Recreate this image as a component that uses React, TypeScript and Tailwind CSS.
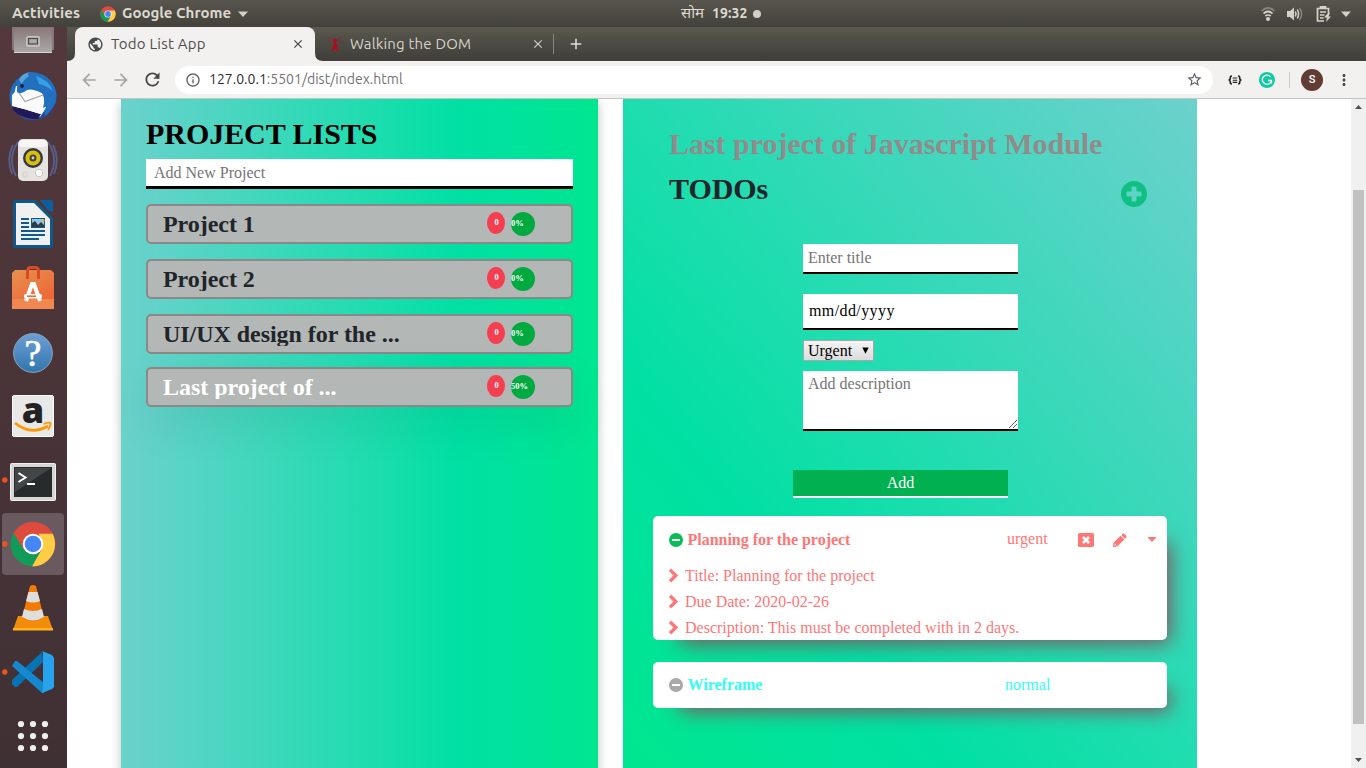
import React from "react";
import { MdPublic, MdClose, MdAdd, MdArrowBack, MdArrowForward, MdRefresh, MdInfoOutline, MdStarBorder, MdMoreVert } from "react-icons/md";

function Slot({ children, running, active }: { children: React.ReactNode; running?: boolean; active?: boolean }) {
  return (
    <svg className="block h-16 w-[67px] shrink-0" viewBox="0 0 67 64">
      {active && <rect x="2" y="1" width="62" height="62" rx="4" fill="#685a5f" />}
      {children}
      {running && <circle cx="4.8" cy="32" r="2.7" fill="#e95420" />}
    </svg>
  );
}

function ChromeLogo() {
  return (
    <g>
      <circle r="22.3" fill="#dd4b3e" />
      <path d="M-19.4 -11 L-9 6 L0 10 L9.5 4 L-0.8 22.3 A22.3 22.3 0 0 1 -19.4 -11Z" fill="#119b58" />
      <path d="M19.6 -10.2 A22.3 22.3 0 0 1 -0.8 22.3 L9 5 L6 -10.2 Z" fill="#ffce44" />
      <circle r="10.3" fill="#fff" />
      <circle r="8.3" fill="#4487f4" />
    </g>
  );
}

function Dock() {
  return (
    <aside className="flex w-[67px] shrink-0 flex-col overflow-hidden bg-linear-to-b from-[#53383c] to-[#3f3034]">
      <svg className="block h-[37px] w-[67px] shrink-0" viewBox="0 27 67 37">
        <defs>
          <linearGradient id="cab" x1="0" y1="0" x2="0" y2="1">
            <stop offset="0" stopColor="#806a6c" />
            <stop offset="1" stopColor="#aaa9a8" />
          </linearGradient>
        </defs>
        <path d="M12 20H54V50H12Z" fill="#857779" />
        <path d="M14 20H52V53H14Z" fill="url(#cab)" />
        <path d="M14 52.5H52" stroke="#d5d5d5" />
        <rect x="26" y="36" width="14" height="11" rx="2" fill="#c4bfbf" />
        <rect x="28.5" y="38.5" width="9" height="5.5" fill="#aaa" stroke="#4b4444" strokeWidth="1.2" />
      </svg>
      <Slot>
        <defs>
          <linearGradient id="tb" x1="0" y1="0" x2="0.8" y2="1">
            <stop offset="0" stopColor="#1b62ad" />
            <stop offset="0.5" stopColor="#2878c8" />
            <stop offset="1" stopColor="#1c3fa8" />
          </linearGradient>
        </defs>
        <circle cx="33" cy="32.5" r="23.5" fill="url(#tb)" />
        <path d="M16 22L12 40L20 47L40 53L46 44L43 30L30 21Z" fill="#fafafa" />
        <path d="M12 42L24 45L41 50L38 55L33 55Q20 54 13 46Z" fill="#211957" />
        <path d="M12 31L12 42L24 45L40 50L43 44L42 30L30 22L19 24Z" fill="#fafafa" />
        <path d="M17 26L25 37.5L43 31" fill="none" stroke="#a5a5a5" strokeWidth="1.2" />
        <path d="M17 25Q17 11 30 8Q52 9 56.5 30Q57 40 50 47L46 52L44 47L47 42L43 44Q46 33 42 29Q32 24 27 26Q21 31 17 28Z" fill="#2370c0" />
        <path d="M19 16Q22 9 30 8Q26 10 29 12Q24 15 22 20Z" fill="#59a3dd" />
        <path d="M36 12Q49 16 53 27Q45 21 39 20Z" fill="#37a0e4" />
        <circle cx="22" cy="22" r="2" fill="#172548" />
      </Slot>
      <Slot>
        <g fill="none" stroke="#56608c" strokeWidth="1.8">
          <path d="M18 14Q7 31 16 48M13 17Q6 31 12 46" />
          <path d="M48 14Q59 31 50 48M53 17Q60 31 54 46" />
        </g>
        <rect x="18" y="11" width="30" height="42" rx="5" fill="#e4e3e0" />
        <rect x="19" y="12" width="28" height="7" rx="4" fill="#f6f6f4" />
        <circle cx="33" cy="30" r="10" fill="#34383a" />
        <circle cx="33" cy="30" r="7.6" fill="#dabd14" />
        <circle cx="33" cy="30" r="3.5" fill="#444536" />
        <circle cx="33" cy="30" r="1.4" fill="#ccd2cc" />
        <circle cx="39" cy="45" r="3.7" fill="#fbfbfb" stroke="#b7b7b4" strokeWidth=".7" />
        <rect x="23" y="44" width="4" height="5" rx="1" fill="none" stroke="#c9c9c6" strokeWidth=".8" />
      </Slot>
      <Slot>
        <path d="M15 8H35L53 26V54Q53 56 51 56H15Q13 56 13 54V10Q13 8 15 8Z" fill="#10578a" />
        <path d="M40 8H51Q53 8 53 10V20Q49 20 46 16Z" fill="#0c5f9b" />
        <path d="M16 11H34L50 27V53H16Z" fill="#f0f0ee" />
        <g stroke="#105b8d" strokeWidth="2"><path d="M21 27H29M21 31H29M21 35H29M21 39H45M21 43H45M21 47H39" /></g>
        <rect x="31" y="26" width="14" height="10" fill="#105b8d" />
        <rect x="32" y="27" width="12" height="8" fill="#8fc5e8" />
        <path d="M32 35V31L35 29L38 33L41 30L44 33V35Z" fill="#2c3c42" />
        <circle cx="43" cy="28.5" r="1.5" fill="#eab43d" />
      </Slot>
      <Slot>
        <defs><linearGradient id="bag" x1="0" y1="0" x2=".6" y2="1"><stop stopColor="#e69150" /><stop offset="1" stopColor="#ee6534" /></linearGradient></defs>
        <path d="M12 17L15 14H51L54 17V53H12Z" fill="url(#bag)" />
        <path d="M12 43H54V53H12Z" fill="#f28851" />
        <path d="M27.5 23V15Q27.5 11.5 31 11.5H35Q38.5 11.5 38.5 15V23" fill="none" stroke="#d94b22" strokeWidth="3" />
        <path d="M26 45L32 28H34L40 45" fill="none" stroke="#fff" strokeWidth="4" />
        <rect x="24" y="38" width="18" height="4.5" rx="2" fill="#fff" />
        <rect x="27" y="39.4" width="9" height="1.6" fill="#ef6b35" />
      </Slot>
      <Slot>
        <defs><linearGradient id="hlp" x1="0" y1="0" x2="0" y2="1"><stop stopColor="#6d9fd8" /><stop offset="1" stopColor="#3076ab" /></linearGradient></defs>
        <circle cx="33" cy="33" r="19.4" fill="url(#hlp)" stroke="#87a5bd" />
        <text x="33" y="46" textAnchor="middle" fill="#fff" stroke="#fff" strokeWidth=".7" fontFamily="Liberation Serif, serif" fontSize="38">?</text>
      </Slot>
      <Slot>
        <rect x="12.5" y="11.5" width="41" height="41" rx="1.5" fill="#e8e8e8" stroke="#fafafa" />
        <text x="33" y="39" textAnchor="middle" fill="#222" fontFamily="Open Sans, sans-serif" fontWeight="800" fontSize="36">a</text>
        <path d="M15 39Q31 52 48 42" fill="none" stroke="#ff9900" strokeWidth="2.8" />
        <path d="M43.5 40Q49 38 50.5 39Q51 42 48 46" fill="none" stroke="#ff9900" strokeWidth="1.8" />
      </Slot>
      <Slot running>
        <rect x="10.5" y="15.5" width="45" height="37" rx="1" fill="#d6d6d4" stroke="#f1f1ef" />
        <rect x="14" y="19" width="38" height="30" fill="#282b2c" />
        <path d="M15 20H51L15 44Z" fill="#424647" />
        <path d="M18.5 25L25.5 29.5L18.5 34M27 36H35" fill="none" stroke="#fff" strokeWidth="2" />
      </Slot>
      <Slot running active>
        <g transform="translate(33 32)"><ChromeLogo /></g>
      </Slot>
      <Slot>
        <path d="M18 40H48L53 54H13Z" fill="#f48c0b" />
        <path d="M13 52H53V54.5H13Z" fill="#ffb320" />
        <path d="M30 10Q33 8 36 10L44 42Q33 49 22 42Z" fill="#f17b04" />
        <path d="M28.5 16H37.5L40 25Q33 28 26 25ZM24 33Q33 37 42 33L44 41Q33 48 22 41Z" fill="#dedfdd" />
      </Slot>
      <Slot running>
        <path d="M12 40L42 12L43 22L17 47H15L12 44Z" fill="#0873b4" />
        <path d="M12 26L15 21H17L44 43V53H42Z" fill="#1688ce" />
        <path d="M42 11L52 15L54 18V47L52 49L42 53L43 50V13Z" fill="#27a2ed" />
      </Slot>
      <Slot>
        {[20, 32, 44].map((y) => [21, 33, 45].map((x) => <circle key={x + "-" + y} cx={x} cy={y} r="3.1" fill="#f0efee" />))}
      </Slot>
    </aside>
  );
}

function TopBar() {
  return (
    <header className="grid h-[27px] shrink-0 grid-cols-[1fr_auto_1fr] items-center bg-linear-to-b from-[#58554d] to-[#42413b] text-[15px] font-semibold text-[#dcd8d0]">
      <div className="flex items-center">
        <span className="ml-3 w-[68px] whitespace-nowrap tracking-[0.15px]">Activities</span>
        <svg className="ml-5 size-4" viewBox="-23 -23 46 46"><ChromeLogo /></svg>
        <span className="ml-[6px] w-[110px] whitespace-nowrap">Google Chrome</span>
        <svg className="ml-[6px] h-[6px] w-[10px]" viewBox="0 0 10 6"><path d="M0 .5H10L5 6Z" fill="#d3cfc8" /></svg>
      </div>
      <div className="flex items-center pl-[76px]">
        <span className="w-[25px] text-[15px] font-normal whitespace-nowrap">सोम</span>
        <span className="ml-[6px] w-[36px] text-[14px] font-bold tracking-[0.1px] whitespace-nowrap">19:32</span>
        <span className="ml-[5px] size-2 rounded-full bg-[#d3cfc8]" />
      </div>
      <div className="flex items-center justify-end pr-[15px]">
        <svg className="h-4 w-4" viewBox="0 0 16 16" fill="none" stroke="#d5d1ca" strokeWidth="1.7">
          <path d="M1.5 5Q8 -1 14.5 5" stroke="#86837b" /><path d="M3.5 7.5Q8 3.5 12.5 7.5M5.3 10Q8 8 10.7 10" />
          <circle cx="8" cy="13" r="1.2" fill="#d5d1ca" />
        </svg>
        <svg className="ml-[11px] h-4 w-4" viewBox="0 0 16 16" fill="none" stroke="#d5d1ca" strokeWidth="1.5">
          <path d="M0 5H3L7 1.5V14.5L3 11H0Z" fill="#d5d1ca" strokeWidth="0" /><path d="M8.3 5.5Q9.8 8 8.3 10.5M10.3 3.5Q12.8 8 10.3 12.5" /><path d="M12.6 2Q16.6 8 12.6 14" stroke="#86837b" />
        </svg>
        <svg className="ml-[13px] h-4 w-4" viewBox="0 0 16 16" fill="none" stroke="#d5d1ca" strokeWidth="1.7">
          <path d="M12.5 7V2.5H1.5V15H8M4.5 2V.8H9.5V2M4 6H10M4 9H8.5M4 12H7.5" /><path d="M12 7L8 11.5H11L10 16L15 10.5H12.5L14 7Z" fill="#d5d1ca" strokeWidth="0" />
        </svg>
        <svg className="ml-[9px] h-[6px] w-[10px]" viewBox="0 0 10 6"><path d="M0 .5H10L5 6Z" fill="#d3cfc8" /></svg>
      </div>
    </header>
  );
}

function BrowserChrome() {
  return (
    <>
      <div className="flex h-[34px] shrink-0 items-end bg-linear-to-b from-[#59594f] to-[#3f3e39] text-[15px]">
        <svg className="size-2 shrink-0" viewBox="0 0 8 8"><path d="M8 0V8H0Q8 8 8 0Z" fill="#f2f1f0" /></svg>
        <div className="flex h-[34px] w-[240px] shrink-0 items-center rounded-t-lg bg-[#f2f1f0] pl-3 text-[#4e4d4b]">
          <MdPublic className="size-[17px] text-[#48494b]" />
          <span className="ml-[7px] w-[180px] tracking-[0.22px] whitespace-nowrap">Todo List App</span>
          <MdClose className="size-[14px] text-[#3f4042]" />
        </div>
        <svg className="size-2 shrink-0" viewBox="0 0 8 8"><path d="M0 0V8H8Q0 8 0 0Z" fill="#f2f1f0" /></svg>
        <div className="flex h-[34px] items-center pl-[4px] text-[#d4d1c9]">
          <svg className="h-4 w-4" viewBox="0 0 16 16" fill="none" stroke="#b8061d" strokeWidth="1.2">
            <path d="M8 5L5 15.5M8 5L11 15.5M6.5 9.5H9.5L5.5 14M6.5 10L10.5 14" /><circle cx="8" cy="4.5" r="1.2" fill="#b8061d" />
            <path d="M5.2 2.5Q4 4 5.2 6M10.8 2.5Q12 4 10.8 6M3 1Q.5 4 3 7.5M13 1Q15.5 4 13 7.5" strokeWidth=".8" strokeDasharray="2 1" />
          </svg>
          <span className="ml-[7px] w-[181px] tracking-[0.18px] whitespace-nowrap">Walking the DOM</span>
          <MdClose className="size-[14px]" />
          <span className="ml-[8px] h-5 w-px bg-[#88867f]" />
          <MdAdd className="ml-[13px] size-[18px] text-[#e4e1d9]" />
        </div>
      </div>
      <div className="flex h-[38px] shrink-0 items-center border-b border-[#c6c4c3] bg-[#f2f1f0]">
        <MdArrowBack className="ml-[12px] size-5 text-[#a5a4a3]" />
        <MdArrowForward className="ml-[12px] size-5 text-[#a5a4a3]" />
        <MdRefresh className="ml-[11px] size-[21px] text-[#464646]" />
        <div className="ml-[12px] flex h-7 w-[1038px] items-center rounded-full bg-white pl-[10px] text-[14px] text-[#737373]">
          <MdInfoOutline className="size-4 text-[#616161]" />
          <span className="ml-2 tracking-[0.01px] whitespace-nowrap"><span className="text-[#2d2d2d]">127.0.0.1</span>:5501/dist/index.html</span>
          <MdStarBorder className="mr-[10px] ml-auto size-[17px] text-[#5f6164]" />
        </div>
        <svg className="ml-[15px] h-3 w-[14px]" viewBox="0 0 14 12" fill="none" stroke="#222" strokeWidth="1.6">
          <path d="M4 2Q2 2 2.3 4Q2.3 6 .5 6Q2.3 6 2.3 8Q2 10 4 10M10 2Q12 2 11.7 4Q11.7 6 13.5 6Q11.7 6 11.7 8Q12 10 10 10" />
          <path d="M4.7 4H9.3M4.7 6.2H9.3M4.7 8.4H9.3" strokeWidth="1.1" />
        </svg>
        <svg className="ml-[17px] size-4" viewBox="0 0 16 16"><circle cx="8" cy="8" r="8" fill="#10caa0" /><path d="M11.5 4.8A4.6 4.6 0 1 0 12.5 8.5H9M12.5 8.5V11.5" fill="none" stroke="#fff" strokeWidth="1.3" /></svg>
        <span className="ml-[14px] h-4 w-px bg-[#ccc]" />
        <span className="ml-[11px] flex size-[22px] items-center justify-center rounded-full bg-[#603c34] pt-px font-[Roboto,sans-serif] text-[11px] font-medium text-white">S</span>
        <MdMoreVert className="ml-[12px] size-[18px] text-[#454545]" />
      </div>
    </>
  );
}

const projects = [
  { name: "Project 1", pct: "0%", cls: "mt-[15px] text-[#212529]" },
  { name: "Project 2", pct: "0%", cls: "mt-[15px] text-[#212529]" },
  { name: "UI/UX design for the ...", pct: "0%", cls: "mt-[15px] text-[#212529]" },
  { name: "Last project of ...", pct: "50%", cls: "mt-[13px] text-white shadow-[0_16px_48px_rgba(0,0,0,0.08)]" },
];

function ProjectPanel() {
  return (
    <section className="h-[760px] w-[477px] shrink-0 bg-[linear-gradient(to_right,#6cd1cc,#34d9b8_37%,#22dcb0_50%,#00e0a3_71%,#00e690)] px-[25px] pt-[17px] shadow-[0_4px_10px_rgba(0,0,0,0.25)]">
      <h2 className="text-[30px] leading-9 font-bold tracking-[-0.05px] text-black">PROJECT LISTS</h2>
      <input className="mt-[7px] block h-[30px] w-full border-b-[3px] border-black bg-white px-2 text-[16px] outline-none placeholder:text-[#757575]" placeholder="Add New Project" />
      {projects.map((p) => (
        <div key={p.name} className={`flex h-10 items-start rounded-[5px] border-2 border-[#8d8888] bg-[#b3b7b5] pt-[6px] pl-[15px] ${p.cls}`}>
          <span className="h-6 w-[324px] overflow-hidden text-[24px] leading-6 font-bold tracking-[-0.04px] whitespace-nowrap">{p.name}</span>
          <span className="h-[22px] w-[18px] rounded-[50%] bg-[#f53e50] pl-px text-center text-[8.5px] leading-[21px] font-bold text-white">0</span>
          <span className="ml-[6px] size-6 rounded-full bg-[#00aa41] text-[8.5px] leading-[23px] font-bold text-white">{p.pct}</span>
        </div>
      ))}
    </section>
  );
}

function MinusDisc({ className }: { className: string }) {
  return (
    <svg className={className} viewBox="0 0 14 14">
      <circle cx="7" cy="7" r="7" fill="currentColor" />
      <rect x="3" y="5.9" width="8" height="2.2" rx=".4" fill="#fff" />
    </svg>
  );
}

function TodoPanel() {
  return (
    <section className="ml-[25px] flex h-[690px] w-[574px] shrink-0 flex-col bg-[linear-gradient(to_bottom_left,#6cd1cc,#34d9b8_37%,#1eddaf_50%,#00e0a3_70%,#00e690_96%)] pt-[27px] text-[16px]">
      <h2 className="ml-[46px] text-[30px] leading-9 font-bold tracking-[-0.03px] whitespace-nowrap text-[#928b8b]">Last project of Javascript Module</h2>
      <div className="mt-[9px] flex h-9 items-start justify-between pr-[50px] pl-[46px]">
        <h2 className="text-[30px] leading-9 font-bold tracking-[-0.05px] text-[#212529]">TODOs</h2>
        <svg className="mt-[10px] size-[26px]" viewBox="0 0 26 26">
          <path fillRule="evenodd" fill="#10c083" d="M13 0A13 13 0 1 1 13 26A13 13 0 1 1 13 0ZM11.3 5.6Q10.5 5.6 10.5 6.4V10.5H6.4Q5.5 10.5 5.5 11.3V14.7Q5.5 15.5 6.4 15.5H10.5V19.7Q10.5 20.5 11.3 20.5H14.7Q15.5 20.5 15.5 19.7V15.5H19.7Q20.5 15.5 20.5 14.7V11.3Q20.5 10.5 19.7 10.5H15.5V6.4Q15.5 5.6 14.7 5.6Z" />
        </svg>
      </div>
      <form className="mt-[37px] ml-[180px] flex w-[215px] flex-col items-start">
        <input className="h-[30px] w-full border-b-2 border-black bg-white px-[5px] outline-none placeholder:text-[#757575]" placeholder="Enter title" />
        <div className="mt-5 h-9 w-full border-b-2 border-black bg-white pl-[6px] leading-[34px] tracking-[0.4px] text-black">mm/dd/yyyy</div>
        <div className="mt-[10px] flex h-[21px] w-[71px] items-center border border-[#a6a6a6] bg-linear-to-b from-[#f4f4f4] to-[#dcdcdc] pl-1 leading-[19px] text-black">
          Urgent
          <svg className="ml-[10px] h-[7px] w-[7px]" viewBox="0 0 7 7"><path d="M.3 .5H6.7L3.5 6.7Z" /></svg>
        </div>
        <div className="mt-[10px] flex h-[60px] w-full items-start justify-between border-b-2 border-black bg-white pl-[5px]">
          <span className="pt-[3px] leading-5 text-[#757575]">Add description</span>
          <svg className="mt-[49px] size-[9px]" viewBox="0 0 9 9"><path d="M0 8L8 0M4 8L8 4" stroke="#555" strokeWidth=".9" /></svg>
        </div>
        <button type="button" className="mt-[39px] -ml-[10px] h-7 w-[215px] border-b-2 border-white bg-[#00b051] pb-px leading-[25px] text-white">Add</button>
      </form>
      <article className="mt-[18px] ml-[30px] h-[124px] w-[514px] shrink-0 rounded-[5px] bg-white text-[#ff7676] shadow-[15px_15px_20px_-12px_rgb(134,78,92)]">
        <div className="flex h-[47px] items-center pl-[15.5px]">
          <MinusDisc className="size-[14px] text-[#06be55]" />
          <b className="ml-[5px] w-[319.5px] tracking-[-0.02px]">Planning for the project</b>
          <span className="w-[71px] pb-px">urgent</span>
          <svg className="size-4" viewBox="0 0 16 16"><rect y="1" width="16" height="14" rx="1.6" fill="#ff7676" /><path d="M5 5L11 11M11 5L5 11" stroke="#fff" strokeWidth="2.6" /></svg>
          <svg className="ml-[19px] size-[14px]" viewBox="0 0 14 14" fill="currentColor">
            <path d="M9.6 .7Q10.4 0 11.2 .7L13.3 2.8Q14 3.6 13.3 4.4L12 5.7L8.3 2ZM7.6 2.7L11.3 6.4L4.2 13.5L.4 14Q0 14 0 13.6L.5 9.8ZM1.9 10.4L1.5 12.5L3.6 12.1Z" fillRule="evenodd" />
          </svg>
          <svg className="ml-[20px] h-[5px] w-[10px]" viewBox="0 0 10 5"><path d="M.3 0H9.7L5 5Z" fill="currentColor" /></svg>
        </div>
        {["Title: Planning for the project", "Due Date: 2020-02-26", "Description: This must be completed with in 2 days."].map((t) => (
          <div key={t} className="flex h-[26px] items-center pl-[15px]">
            <svg className="mb-[2px] h-[15px] w-[12px]" viewBox="0 0 12 15"><path d="M2 1.8L7.8 7.5L2 13.2" fill="none" stroke="currentColor" strokeWidth="3.3" /></svg>
            <span className="ml-[5px] whitespace-nowrap">{t}</span>
          </div>
        ))}
      </article>
      <article className="mt-[22px] ml-[30px] flex h-[46px] w-[514px] shrink-0 items-center rounded-[5px] bg-white pl-[15.5px] text-[#35fcf4] shadow-[15px_15px_20px_-12px_rgb(134,78,92)]">
        <MinusDisc className="size-[14px] text-[#a9a9a9]" />
        <b className="ml-[5px] w-[317.5px]">Wireframe</b>
        <span className="pb-px">normal</span>
      </article>
    </section>
  );
}

export default function App() {
  return (
    <div className="flex h-[768px] w-[1366px] flex-col overflow-hidden bg-white font-[Ubuntu,'Noto_Sans',sans-serif]">
      <TopBar />
      <div className="flex min-h-0 flex-1">
        <Dock />
        <div className="flex min-w-0 flex-1 flex-col">
          <BrowserChrome />
          <div className="flex min-h-0 flex-1">
            <main className="flex flex-1 items-start overflow-hidden bg-white pl-[54px] font-['Liberation_Serif',serif]">
              <ProjectPanel />
              <TodoPanel />
            </main>
            <div className="flex w-[15px] shrink-0 flex-col items-center bg-[#f0f0f0]">
              <svg className="mt-[6px] h-[4px] w-[7px] shrink-0" viewBox="0 0 7 4"><path d="M3.5 0L7 4H0Z" fill="#505050" /></svg>
              <div className="mt-[81px] h-[534px] w-[11px] shrink-0 bg-[#c1c1c1]" />
              <svg className="mt-[34px] h-[4px] w-[7px] shrink-0" viewBox="0 0 7 4"><path d="M0 0H7L3.5 4Z" fill="#505050" /></svg>
            </div>
          </div>
        </div>
      </div>
    </div>
  );
}
